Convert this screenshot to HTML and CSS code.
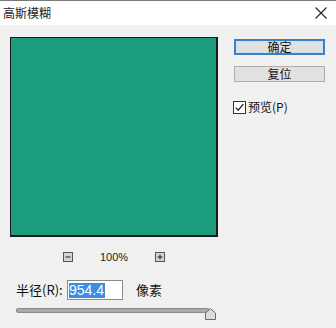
FILE: index.html
```html
<!DOCTYPE html>
<html lang="zh">
<head>
<meta charset="utf-8">
<link rel="stylesheet" href="styles.css">
</head>
<body>
<div class="window">
  <div class="titlebar">
    <span class="title">高斯模糊</span>
    <svg class="close" width="12" height="12" viewBox="0 0 12 12"><path d="M0.5 0.5 L11.5 11.5 M11.5 0.5 L0.5 11.5" stroke="#222" stroke-width="1.1" fill="none"/></svg>
  </div>
  <div class="main">
    <div class="left">
      <div class="preview"></div>
      <div class="zoomrow">
        <span class="zbtn"><svg width="10" height="10" viewBox="0 0 10 10"><rect x="0.5" y="0.5" width="9" height="9" fill="#d4d4d4" stroke="#555"/><path d="M2.5 5 H7.5" stroke="#222" stroke-width="1"/></svg></span>
        <span class="zoomtext">100%</span>
        <span class="zbtn"><svg width="10" height="10" viewBox="0 0 10 10"><rect x="0.5" y="0.5" width="9" height="9" fill="#d4d4d4" stroke="#555"/><path d="M2.5 5 H7.5 M5 2.5 V7.5" stroke="#222" stroke-width="1"/></svg></span>
      </div>
    </div>
    <div class="right">
      <div class="btn primary">确定</div>
      <div class="btn">复位</div>
      <label class="check"><span class="box"><svg width="11" height="11" viewBox="0 0 11 11"><path d="M1.8 5.6 L4.3 8.2 L9.3 2.2" stroke="#111" stroke-width="1.2" fill="none"/></svg></span><span>预览(P)</span></label>
    </div>
  </div>
  <div class="radius">
    <span class="label">半径(R):</span>
    <span class="input"><span class="sel">954.4</span></span>
    <span class="unit">像素</span>
  </div>
  <div class="slider">
    <div class="track"></div>
    <svg class="thumb" width="11" height="12" viewBox="0 0 11 12"><path d="M0.5 11.5 V5 L5.5 0.7 L10.5 5 V11.5 Z" fill="#dcdcdc" stroke="#6a6a6a"/></svg>
  </div>
</div>
</body>
</html>
```
FILE: styles.css
```css
html, body {
  margin: 0;
  padding: 0;
}
body {
  width: 336px;
  height: 328px;
  overflow: hidden;
  background: #f0f0f0;
  font-family: "Noto Sans CJK SC", "Liberation Sans", sans-serif;
  color: #111;
}
.window {
  width: 336px;
  height: 328px;
  box-sizing: border-box;
  border-top: 1px solid #7a7a7a;
}
.titlebar {
  height: 24px;
  background: #fff;
  display: flex;
  align-items: center;
  justify-content: space-between;
  padding: 0 9px 0 3px;
}
.title {
  font-size: 12px;
  line-height: 14px;
  color: #222;
}
.close {
  display: block;
}
.main {
  display: flex;
  padding: 12px 0 0 10px;
}
.left {
  width: 208px;
}
.preview {
  width: 208px;
  height: 200px;
  box-sizing: border-box;
  background: #1c9e7e;
  border: 1px solid #1a1a1a;
  border-width: 1px 2px 2px 1px;
}
.zoomrow {
  margin-top: 15px;
  display: flex;
  align-items: center;
  justify-content: center;
  gap: 27px;
  height: 10px;
}
.zbtn svg {
  display: block;
}
.zoomtext {
  font-family: "Liberation Sans", sans-serif;
  font-size: 11px;
  line-height: 10px;
  color: #222;
}
.right {
  margin-left: 16px;
  width: 91px;
  padding-top: 2px;
}
.btn {
  height: 16px;
  box-sizing: border-box;
  background: #e1e1e1;
  border: 1px solid #adadad;
  font-size: 12px;
  line-height: 14px;
  text-align: center;
  color: #111;
}
.btn.primary {
  border: 2px solid #3b82c4;
  line-height: 12px;
  box-shadow: inset 0 0 0 1px #cde0f2;
}
.btn + .btn {
  margin-top: 11px;
}
.check {
  display: flex;
  align-items: center;
  margin-top: 18px;
  margin-left: -1px;
  font-size: 12px;
  line-height: 14px;
  gap: 2px;
}
.box {
  width: 13px;
  height: 13px;
  box-sizing: border-box;
  border: 1px solid #333;
  background: #fff;
  display: flex;
  align-items: center;
  justify-content: center;
}
.box svg {
  display: block;
}
.radius {
  display: flex;
  align-items: center;
  padding-left: 16px;
  margin-top: 18px;
  height: 20px;
}
.label {
  font-size: 13px;
  line-height: 14px;
  width: 51px;
}
.input {
  width: 56px;
  height: 20px;
  box-sizing: border-box;
  background: #fff;
  border: 1px solid #8a8a8a;
  display: flex;
  align-items: center;
  padding-left: 1px;
}
.sel {
  background: #3a8ee6;
  color: #fff;
  font-family: "Liberation Sans", sans-serif;
  font-size: 14px;
  line-height: 15px;
  padding-right: 1px;
}
.unit {
  margin-left: 13px;
  font-size: 13px;
  line-height: 14px;
}
.slider {
  position: relative;
  margin: 8px 0 0 16px;
  width: 200px;
  height: 12px;
}
.track {
  margin-top: 3px;
  width: 194px;
  height: 5px;
  box-sizing: border-box;
  background: #a9a9a9;
  border: 1px solid #8c8c8c;
  border-radius: 2px;
}
.thumb {
  position: absolute;
  left: 189px;
  top: 0;
}
```
